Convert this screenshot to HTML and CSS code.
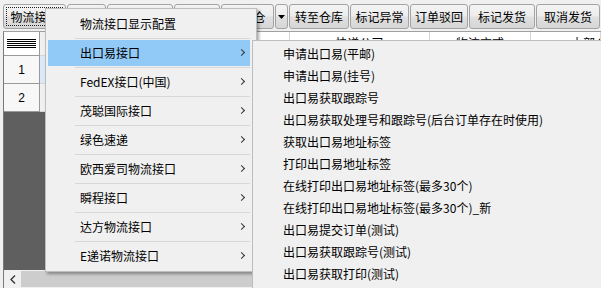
FILE: index.html
```html
<!DOCTYPE html>
<html lang="zh-CN">
<head>
  <meta charset="UTF-8">
  <title>订单处理</title>
  <link rel="stylesheet" href="styles.css">
</head>
<body>

  <div class="toolbar">
    <button class="btn btn-focus w63"><span class="focus-ring">物流接口</span></button>
    <button class="btn w39">导出</button>
    <button class="btn w66">合并订单</button>
    <button class="btn w46">拆分单</button>
    <button class="btn w53">海外仓</button>
    <button class="btn btn-drop">
      <svg width="7" height="4" viewBox="0 0 7 4"><path d="M0 0h7L3.5 4z" fill="#000"/></svg>
    </button>
    <button class="btn w60">转至仓库</button>
    <button class="btn w59">标记异常</button>
    <button class="btn w58">订单驳回</button>
    <button class="btn w66">标记发货</button>
    <button class="btn w64">取消发货</button>
  </div>

  <div class="grid">
    <div class="grid-row head-row">
      <div class="row-head">
        <svg width="29" height="10" viewBox="0 0 29 10">
          <path d="M0 0.5h29M0 2.5h29M0 4.5h29M0 6.5h29M0 8.5h29" stroke="#000" stroke-width="1"/>
        </svg>
      </div>
      <div class="cell narrow"></div>
      <div class="cell c1"></div>
      <div class="cell c2">快递公司</div>
      <div class="cell c3">物流方式</div>
      <div class="cell c4">本部仓库</div>
    </div>
    <div class="grid-row data-row">
      <div class="row-head">1</div>
      <div class="cell narrow selected"></div>
      <div class="cell c1"></div>
      <div class="cell c2"></div>
      <div class="cell c3"></div>
      <div class="cell c4"></div>
    </div>
    <div class="grid-row data-row">
      <div class="row-head">2</div>
      <div class="cell narrow"></div>
      <div class="cell c1"></div>
      <div class="cell c2"></div>
      <div class="cell c3"></div>
      <div class="cell c4"></div>
    </div>
    <div class="workspace"></div>
    <div class="hscroll">
      <div class="scroll-btn">
        <svg width="6" height="9" viewBox="0 0 6 9"><path d="M5 0.5L1 4.5L5 8.5" fill="none" stroke="#333" stroke-width="1.3"/></svg>
      </div>
      <div class="scroll-thumb"></div>
    </div>
  </div>

  <!-- popup menu -->
  <div class="menu">
    <div class="menu-item">物流接口显示配置</div>
    <div class="menu-sep"></div>
    <div class="menu-item has-sub active">出口易接口</div>
    <div class="menu-sep"></div>
    <div class="menu-item has-sub">FedEX接口(中国)</div>
    <div class="menu-sep"></div>
    <div class="menu-item has-sub">茂聪国际接口</div>
    <div class="menu-sep"></div>
    <div class="menu-item has-sub">绿色速递</div>
    <div class="menu-sep"></div>
    <div class="menu-item has-sub">欧西爱司物流接口</div>
    <div class="menu-sep"></div>
    <div class="menu-item has-sub">瞬程接口</div>
    <div class="menu-sep"></div>
    <div class="menu-item has-sub">达方物流接口</div>
    <div class="menu-sep"></div>
    <div class="menu-item has-sub">E递诺物流接口</div>
  </div>

  <div class="submenu">
    <div class="sub-item">申请出口易(平邮)</div>
    <div class="sub-item">申请出口易(挂号)</div>
    <div class="sub-item">出口易获取跟踪号</div>
    <div class="sub-item">出口易获取处理号和跟踪号(后台订单存在时使用)</div>
    <div class="sub-item">获取出口易地址标签</div>
    <div class="sub-item">打印出口易地址标签</div>
    <div class="sub-item">在线打印出口易地址标签(最多30个)</div>
    <div class="sub-item">在线打印出口易地址标签(最多30个)_新</div>
    <div class="sub-item">出口易提交订单(测试)</div>
    <div class="sub-item">出口易获取跟踪号(测试)</div>
    <div class="sub-item">出口易获取打印(测试)</div>
  </div>

</body>
</html>
```

FILE: styles.css
```css
* {
  margin: 0;
  padding: 0;
  box-sizing: border-box;
}

body {
  font-family: "Noto Sans CJK SC", "Noto Sans", sans-serif;
  font-size: 12px;
  color: #000;
  background: #f0f0f0;
  width: 601px;
  height: 288px;
  overflow: hidden;
  position: relative;
}

/* toolbar */
.toolbar {
  height: 31px;
  display: flex;
  gap: 1px;
  padding: 4px 0 0 3px;
}

.btn {
  height: 25px;
  font: inherit;
  line-height: 23px;
  border: 1px solid #a3a3a3;
  border-radius: 3px;
  background: linear-gradient(to bottom, #f4f4f4 0%, #ececec 48%, #e0e0e0 52%, #d6d6d6 100%);
  color: #000;
  display: flex;
  align-items: center;
  justify-content: center;
  flex-shrink: 0;
  white-space: nowrap;
}

.btn-focus {
  padding: 2px;
}

.focus-ring {
  display: block;
  width: 100%;
  height: 100%;
  border: 1px dotted #222;
  line-height: 17px;
  text-align: center;
}

.btn-drop { width: 13px; padding: 0; }
.w39 { width: 39px; }
.w46 { width: 46px; }
.w53 { width: 53px; }
.w58 { width: 58px; }
.w59 { width: 59px; }
.w60 { width: 60px; }
.w63 { width: 63px; }
.w64 { width: 64px; }
.w66 { width: 66px; }

/* grid */
.grid {
  margin-left: 3px;
  height: 257px;
  border-left: 1px solid #7a7a7a;
  border-top: 1px solid #a0a0a0;
  background: #5f5f5f;
  display: flex;
  flex-direction: column;
}

.grid-row {
  display: flex;
  flex-shrink: 0;
  background: #fff;
}

.head-row { height: 24px; }
.data-row { height: 28px; }

.row-head {
  width: 36px;
  display: flex;
  align-items: center;
  justify-content: center;
  background: #f7f7f7;
  border-right: 1px solid #9a9a9a;
  border-bottom: 1px solid #9a9a9a;
  font-family: "Liberation Sans", Arial, sans-serif;
  font-size: 12px;
}

.head-row .row-head {
  background: #fff;
  justify-content: flex-start;
  padding-left: 3px;
}

.cell {
  border-right: 1px solid #d5d5d5;
  border-bottom: 1px solid #d5d5d5;
  text-align: center;
  line-height: 22px;
  overflow: hidden;
  white-space: nowrap;
}

.narrow { width: 6px; background: #f0f0f0; border-right-color: #9a9a9a; }
.narrow.selected { background: #dbe8f8; }
.c1 { width: 244px; }
.c2 { width: 140px; }
.c3 { width: 101px; }
.c4 { flex: 1; text-align: left; padding-left: 40px; }

.workspace {
  flex: 1;
}

.hscroll {
  height: 18px;
  display: flex;
  background: #f0f0f0;
}

.scroll-btn {
  width: 17px;
  display: flex;
  align-items: center;
  justify-content: center;
}

.scroll-thumb {
  flex: 1;
  margin: 1px 0;
  background: #cdcdcd;
}

/* popup menus */
.menu {
  position: absolute;
  left: 45px;
  top: 8px;
  width: 212px;
  padding: 2px 6px 2px 2px;
  background: #f0f0f0;
  border: 1px solid #bdbdbd;
  box-shadow: 2px 2px 3px rgba(0, 0, 0, 0.35);
}

.menu-item {
  height: 26px;
  line-height: 26px;
  padding-left: 32px;
  position: relative;
  white-space: nowrap;
}

.menu-item.active {
  background: #91c9f7;
}

.has-sub::after {
  content: "";
  position: absolute;
  right: 6px;
  top: 10px;
  width: 4px;
  height: 4px;
  border-top: 1px solid #333;
  border-right: 1px solid #333;
  transform: rotate(45deg);
}

.menu-sep {
  height: 3px;
  margin-left: 27px;
  position: relative;
}

.menu-sep::before {
  content: "";
  position: absolute;
  left: 0;
  right: 0;
  top: 1px;
  height: 1px;
  background: #d7d7d7;
}

.submenu {
  position: absolute;
  left: 252px;
  top: 40px;
  width: 360px;
  height: 260px;
  padding-top: 2px;
  background: #f0f0f0;
  border: 1px solid #bdbdbd;
}

.sub-item {
  height: 22px;
  line-height: 22px;
  padding-left: 30px;
  white-space: nowrap;
}
```
